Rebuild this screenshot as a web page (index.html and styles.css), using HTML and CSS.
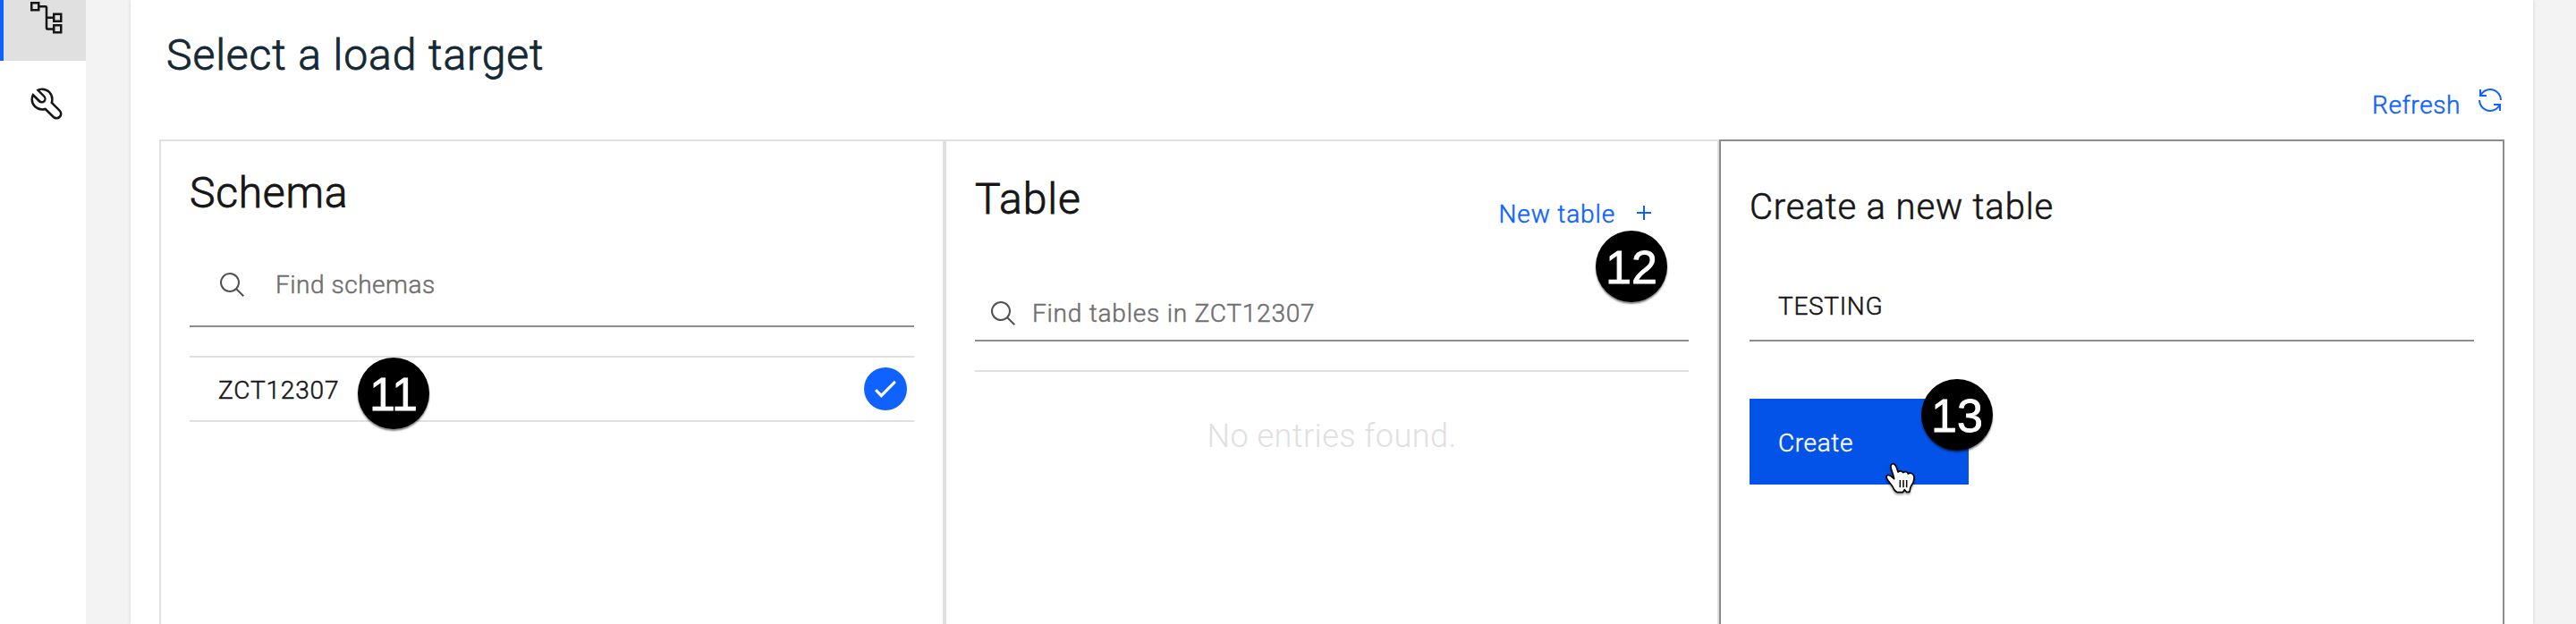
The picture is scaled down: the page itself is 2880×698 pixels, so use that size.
FILE: index.html
```html
<!DOCTYPE html>
<html lang="en">
<head>
<meta charset="utf-8">
<title>Select a load target</title>
<link rel="stylesheet" href="styles.css">
</head>
<body>
<div class="app">
  <nav class="side">
    <a class="side-item active">
      <svg class="icon-nav" viewBox="0 0 40 40" fill="none" stroke="#161616" stroke-width="2.5">
        <rect x="3.25" y="3.25" width="8" height="8"/>
        <rect x="28.25" y="15.75" width="8" height="8"/>
        <rect x="28.25" y="28.25" width="8" height="8"/>
        <path d="M11.5 7.25H19a1 1 0 0 1 1 1V31.5a1 1 0 0 0 1 1H28M20 19.75h8"/>
      </svg>
    </a>
    <a class="side-item">
      <svg class="icon-nav" viewBox="0 0 32 32" fill="#161616"><path d="M12.1 2a9.8 9.8 0 00-5.4 1.6l6.4 6.4a2.1 2.1 0 01.2 3 2.1 2.1 0 01-3-.2L3.7 6.4A9.84 9.84 0 002 12.1a10.14 10.14 0 0010.1 10.1 10.9 10.9 0 002.6-.3l6.7 6.7a5 5 0 007.1-7.1l-6.7-6.7a10.9 10.9 0 00.3-2.6A10 10 0 0012.1 2zm8 10.1a7.61 7.61 0 01-.3 2.1l-.3 1.1.8.8 6.7 6.7a2.88 2.88 0 01.9 2.1A2.72 2.72 0 0127 27a2.9 2.9 0 01-4.2 0l-6.7-6.7-.8-.8-1.1.3a7.61 7.61 0 01-2.1.3 8.27 8.27 0 01-5.7-2.3A7.63 7.63 0 014 12.1a8.33 8.33 0 01.3-2.2l4.4 4.4a4.14 4.14 0 005.9.2 4.14 4.14 0 00-.2-5.9L10 4.2a6.45 6.45 0 012-.3 8.27 8.27 0 015.7 2.3A8.49 8.49 0 0120.1 12.1z"/></svg>
    </a>
  </nav>
  <main class="page">
    <header class="head">
      <h1 class="title">Select a load target</h1>
      <a class="refresh"><span class="refresh-label">Refresh</span>
        <svg class="icon" viewBox="0 0 32 32" fill="#0f62fe"><path d="M12 10H6.78A11 11 0 0 1 27 16h2A13 13 0 0 0 6 7.68V4H4v8h8zM20 22h5.22A11 11 0 0 1 5 16H3a13 13 0 0 0 23 8.32V28h2V20H20z"/></svg>
      </a>
    </header>
    <div class="columns">
      <section class="col">
        <h2 class="col-title">Schema</h2>
        <div class="field field-schema">
          <svg class="icon" viewBox="0 0 32 32" fill="#525252"><path d="M30 28.59L22.45 21A11 11 0 1 0 21 22.45L28.59 30zM5 14a9 9 0 1 1 9 9 9 9 0 0 1-9-9z"/></svg>
          <span class="placeholder placeholder-schema">Find schemas</span>
        </div>
        <div class="row">
          <span class="row-name">ZCT12307</span>
          <svg class="check" viewBox="0 0 48 48"><circle cx="24" cy="24" r="24" fill="#0f62fe"/><path d="M12 26.2l2.1-2.1 5.2 5.2L33.8 14.8l2.1 2.1-16.6 17.2z" fill="#fff"/></svg>
        </div>
      </section>
      <section class="col">
        <div class="table-head">
          <h2 class="col-title table-title">Table</h2>
          <a class="new-table">New table
            <svg class="plus" viewBox="0 0 16 16" stroke="#0f62fe" stroke-width="2"><path d="M8 0v16M0 8h16"/></svg>
          </a>
        </div>
        <div class="field field-table">
          <svg class="icon" viewBox="0 0 32 32" fill="#525252"><path d="M30 28.59L22.45 21A11 11 0 1 0 21 22.45L28.59 30zM5 14a9 9 0 1 1 9 9 9 9 0 0 1-9-9z"/></svg>
          <span class="placeholder">Find tables in ZCT12307</span>
        </div>
        <p class="empty">No entries found.</p>
      </section>
      <section class="col col-active">
        <h3 class="create-title">Create a new table</h3>
        <div class="field field-name">TESTING</div>
        <button class="create">Create</button>
      </section>
    </div>
  </main>
  <span class="badge badge-11">11</span>
  <span class="badge badge-12">12</span>
  <span class="badge badge-13">13</span>
  <svg class="cursor" viewBox="0 0 150 150">
    <path d="M53 113C49 100 38 92 31 80C25 71 26 63 34 64C42 65 47 72 53 77C52 66 43 48 42 37C41 28 47 25 52 27C60 30 62 42 66 54C72 49 80 50 83 56C89 50 98 53 100 60C107 55 116 58 119 67C122 78 116 94 109 103C106 108 107 115 104 121L94 121L88 113L82 122H64C60 122 57 118 53 113Z" fill="#fff" stroke="#000" stroke-width="5" stroke-linejoin="round"/>
    <path d="M73 81v25M84 81v25M95 81v25" stroke="#000" stroke-width="4.5"/>
  </svg>
</div>
</body>
</html>
```
FILE: styles.css
```css
* { box-sizing: border-box; }

body {
  margin: 0;
  background: #f3f3f3;
  color: #161616;
  font-family: Roboto, "Liberation Sans", sans-serif;
  font-size: 28px;
  font-weight: 300;
  line-height: 36px;
  -webkit-text-stroke: 0.5px currentColor;
}

h1, h2, h3, p { margin: 0; font-weight: 300; }

.app {
  position: relative;
  display: flex;
  width: 2880px;
  height: 698px;
  overflow: hidden;
}

.side { flex: none; width: 96px; height: 698px; background: #fff; overflow: hidden; }
.side-item {
  display: flex;
  align-items: center;
  justify-content: center;
  height: 96px;
  padding-left: 4px;
  border-left: 4px solid transparent;
}
.side-item.active { margin-top: -28px; border-color: #0f62fe; background: #e0e0e0; }
.icon-nav { width: 40px; height: 40px; }
.icon { flex: none; width: 32px; height: 32px; }

.page {
  width: 2686px;
  margin-left: 50px;
  padding: 0 32px;
  background: #fff;
  box-shadow: 0 0 4px rgba(0, 0, 0, 0.14);
}

.head {
  display: flex;
  justify-content: space-between;
  align-items: flex-start;
  height: 156px;
}
.title {
  padding: 32px 0 0 8px;
  color: #152935;
  font-size: 48px;
  line-height: 60px;
  letter-spacing: 0.93px;
  -webkit-text-stroke-width: 0.9px;
}
.refresh { display: flex; gap: 17px; padding-top: 96px; color: #0f62fe; letter-spacing: 0.6px; }
.refresh-label { padding-top: 4px; }

.columns { display: grid; grid-template-columns: 878px 866px 878px; height: 600px; }
.col { padding: 28px 32px 0; border: 2px solid #e0e0e0; }
.col-active { padding-top: 49px; border-color: #8d8d8d; }
.col-title { font-size: 48px; line-height: 60px; letter-spacing: 0.75px; -webkit-text-stroke-width: 0.9px; }

.field { display: flex; align-items: center; border-bottom: 2px solid #8d8d8d; }
.placeholder { padding-top: 1px; color: #6f6f6f; letter-spacing: 0.79px; }
.placeholder-schema { letter-spacing: 0.53px; }
.field-schema { gap: 33px; height: 94px; margin-top: 26px; padding-left: 31px; }
.field-table { gap: 17px; height: 62px; margin-top: 60px; padding-left: 15px; }
.field-name { height: 78px; margin-top: 47px; padding: 1px 0 0 32px; letter-spacing: 0.68px; }

.row {
  display: flex;
  align-items: center;
  justify-content: space-between;
  height: 74px;
  margin-top: 32px;
  padding: 0 8px 0 32px;
  border: solid #e0e0e0;
  border-width: 2px 0;
}
.row-name { padding-top: 3px; letter-spacing: 0.85px; }
.check { width: 48px; height: 48px; }

.table-head { display: flex; justify-content: space-between; align-items: flex-start; height: 74px; padding-right: 42px; }
.table-title { padding-top: 7px; letter-spacing: 0.96px; }
.new-table { display: flex; gap: 24px; padding-top: 36px; color: #0f62fe; letter-spacing: 0.86px; }
.plus { width: 16px; height: 16px; margin-top: 8px; }

.empty {
  margin-top: 32px;
  padding-top: 49px;
  border-top: 2px solid #e0e0e0;
  color: #e0e0e0;
  font-size: 36px;
  line-height: 46px;
  letter-spacing: 0.5px;
  text-align: center;
  -webkit-text-stroke-width: 0;
}

.create-title { font-size: 40px; line-height: 50px; letter-spacing: 0.87px; -webkit-text-stroke-width: 0.6px; }
.create {
  display: block;
  width: 245px;
  height: 96px;
  margin-top: 64px;
  padding: 3px 0 0 32px;
  border: 0;
  background: #0353e9;
  color: #fff;
  font: inherit;
  letter-spacing: 0.63px;
  text-align: left;
  -webkit-text-stroke: 0.4px #fff;
}

/* Step markers drawn over the page */
.badge {
  position: absolute;
  width: 80px;
  height: 80px;
  padding-top: 1px;
  border-radius: 50%;
  background: #000;
  box-shadow: 0 2px 2px rgba(0, 0, 0, 0.5);
  color: #fff;
  font: 52px/80px "Liberation Sans", sans-serif;
  text-align: center;
  -webkit-text-stroke: 0.8px #fff;
}
.badge-11 { left: 400px; top: 400px; }
.badge-12 { left: 1784px; top: 258px; }
.badge-13 { left: 2148px; top: 424px; }

.cursor {
  position: absolute;
  left: 2100px;
  top: 510px;
  width: 50px;
  height: 50px;
  filter: drop-shadow(0 2px 1px rgba(0, 0, 0, 0.35));
}
```
